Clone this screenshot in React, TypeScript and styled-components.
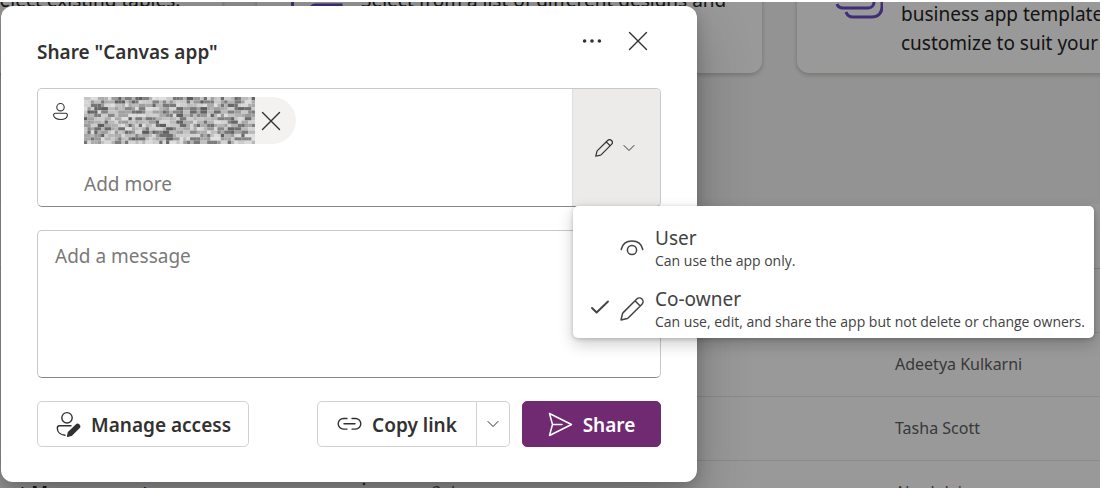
import React from "react";
import styled, { createGlobalStyle } from "styled-components";

const GlobalStyle = createGlobalStyle`
  * { box-sizing: border-box; }
  html, body { margin: 0; background: #ffffff; }
  body, button, input, textarea {
    font-family: "Noto Sans", "Open Sans", sans-serif;
  }
`;

/* ---------- Page behind the dialog ---------- */

const Screen = styled.div`
  height: 100vh;
  padding: 2px 2px 0 0;
  overflow: hidden;
`;

const Page = styled.main`
  position: relative;
  height: 100%;
  background: #f6f6f5;
  overflow: hidden;
`;

const Cards = styled.section`
  display: grid;
  grid-template-columns: repeat(3, 505px);
  grid-template-rows: 71px;
  gap: 35px;
  align-items: end;
  justify-content: start;
  height: 71px;
  margin-left: -283px;
`;

const Card = styled.article`
  display: flex;
  align-items: center;
  gap: 18px;
  height: 131px;
  padding: 14px 24px 0 34px;
  border-radius: 12px;
  background: #ffffff;
  box-shadow: 0 2px 5px rgba(0, 0, 0, 0.22);
`;

const CardIcon = styled.svg`
  flex: none;
  width: 52px;
  height: 52px;
`;

const CardText = styled.p<{ $lines: number }>`
  height: ${(p) => p.$lines * 29}px;
  margin: 0;
  padding-top: 29px;
  font-size: 19px;
  line-height: 29px;
  color: #242424;
  white-space: nowrap;
`;

const TablePanel = styled.section`
  margin-top: 131px;
  background: #ffffff;
`;

const AppsTable = styled.table`
  width: 1121px;
  margin-left: -21px;
  table-layout: fixed;
  border-collapse: collapse;
  font-size: 16px;
  color: #605e5c;
`;

const HeadCell = styled.th<{ $width?: string }>`
  width: ${(p) => p.$width ?? "auto"};
  height: 64px;
  padding: 0;
  text-align: left;
  font-weight: 400;
  border-bottom: 1px solid #d8d8d8;
`;

const Cell = styled.td<{ $strong?: boolean }>`
  height: 64px;
  padding: 0;
  border-bottom: 1px solid #e8e8e8;
  font-size: ${(p) => (p.$strong ? "18px" : "16px")};
  font-weight: ${(p) => (p.$strong ? 600 : 400)};
  color: ${(p) => (p.$strong ? "#242424" : "inherit")};
`;

/* ---------- Dialog ---------- */

const Scrim = styled.div`
  position: absolute;
  inset: 0;
  padding: 4px 1px;
  background: rgba(0, 0, 0, 0.4);
`;

const Dialog = styled.form`
  width: 100%;
  max-width: 696px;
  padding: 12px 36px 35px;
  border-radius: 12px;
  background: #ffffff;
  box-shadow: 0 24px 56px rgba(0, 0, 0, 0.24), 0 4px 16px rgba(0, 0, 0, 0.2);
  color: #323130;
`;

const Header = styled.header`
  display: flex;
  justify-content: space-between;
  height: 70px;
`;

const Title = styled.h2`
  margin: 0;
  font-size: 19px;
  font-weight: 600;
  line-height: 68px;
`;

const HeaderActions = styled.div`
  display: flex;
  height: 46px;
`;

const IconButton = styled.button<{ $width: number }>`
  display: flex;
  align-items: center;
  justify-content: center;
  width: ${(p) => p.$width}px;
  padding: 0;
  border: 0;
  background: transparent;
  color: #323130;
`;

const Picker = styled.div`
  display: flex;
  height: 119px;
  border: 1px solid #c8c8c8;
  border-bottom-color: #8a8886;
  border-radius: 5px;
`;

const PickerIcon = styled.div`
  flex: none;
  width: 46px;
  padding: 13px 0 0 14px;
`;

const PickerBody = styled.div`
  flex: 1;
  min-width: 0;
  padding-top: 8px;
`;

const Chip = styled.div`
  display: flex;
  width: 212px;
  height: 47px;
  border-radius: 0 24px 24px 0;
  background: #f3f2f1;
`;

const AddMore = styled.input`
  display: block;
  width: 100%;
  height: 30px;
  margin-top: 25px;
  padding: 0;
  border: 0;
  outline: 0;
  background: transparent;
  font-size: 19px;
  &::placeholder { color: #7a7978; opacity: 1; }
`;

const Permission = styled.div`
  position: relative;
  flex: none;
  width: 88px;
`;

const PermissionButton = styled.button`
  display: flex;
  align-items: center;
  justify-content: center;
  gap: 10px;
  width: 100%;
  height: 100%;
  padding: 0 3px 0 0;
  border: 0;
  border-left: 1px solid #e1dfdd;
  border-radius: 0 4px 4px 0;
  background: #edebe9;
  color: #323130;
`;

const Menu = styled.div`
  position: absolute;
  top: 100%;
  left: 1px;
  z-index: 2;
  width: 521px;
  padding: 10px 0 0;
  border-radius: 5px;
  background: #ffffff;
  box-shadow: 0 6px 16px rgba(0, 0, 0, 0.2), 0 1px 4px rgba(0, 0, 0, 0.2);
`;

const MenuItem = styled.button`
  display: grid;
  grid-template-columns: 24px 24px 1fr;
  align-items: center;
  justify-items: center;
  gap: 8px;
  width: 100%;
  height: 61px;
  padding: 2px 0 0 15px;
  border: 0;
  background: transparent;
  text-align: left;
  color: #424242;
`;

const MenuText = styled.span`
  display: flex;
  flex-direction: column;
  justify-self: start;
  padding: 2px 0 0 3px;
`;

const MenuTitle = styled.span`
  font-size: 19px;
  line-height: 24px;
`;

const MenuHint = styled.span`
  font-family: "Open Sans", "Noto Sans", sans-serif;
  font-size: 14px;
  line-height: 22px;
  white-space: nowrap;
`;

const Message = styled.textarea`
  display: block;
  width: 100%;
  height: 148px;
  margin: 23px 0;
  padding: 11px 17px;
  border: 1px solid #c8c8c8;
  border-bottom-color: #8a8886;
  border-radius: 5px;
  outline: 0;
  resize: none;
  font-size: 19px;
  line-height: 28px;
  &::placeholder { color: #7a7978; opacity: 1; }
`;

const Footer = styled.footer`
  display: flex;
  gap: 12px;
  height: 46px;
`;

const Button = styled.button<{ $primary?: boolean; $width: number }>`
  display: flex;
  align-items: center;
  justify-content: center;
  gap: 10px;
  width: ${(p) => p.$width}px;
  padding: 0;
  border: 1px solid ${(p) => (p.$primary ? "#702a72" : "#d1d1d1")};
  border-radius: 5px;
  background: ${(p) => (p.$primary ? "#702a72" : "#ffffff")};
  color: ${(p) => (p.$primary ? "#ffffff" : "#323130")};
  font-size: 19px;
  font-weight: 600;
  white-space: nowrap;
`;

const ButtonLabel = styled.span`
  padding-top: 2px;
`;

const SplitButton = styled.div`
  display: flex;
  margin-left: auto;
  & > :first-child { border-radius: 5px 0 0 5px; }
  & > :last-child { border-radius: 0 5px 5px 0; border-left: 0; }
`;

/* ---------- Drawings ---------- */

const stroke = {
  fill: "none",
  stroke: "currentColor",
  strokeLinecap: "round" as const,
  strokeLinejoin: "round" as const,
};

const CloseIcon = () => (
  <svg width="20" height="20" viewBox="0 0 20 20" aria-hidden="true" {...stroke} strokeWidth="1.4">
    <path d="M1.5 1.5 18.5 18.5M18.5 1.5 1.5 18.5" />
  </svg>
);

const MoreIcon = () => (
  <svg width="20" height="6" viewBox="0 0 20 6" aria-hidden="true" fill="currentColor">
    <circle cx="2.6" cy="3" r="1.8" />
    <circle cx="10" cy="3" r="1.8" />
    <circle cx="17.4" cy="3" r="1.8" />
  </svg>
);

const RowMenuIcon = () => (
  <svg width="4" height="16" viewBox="0 0 4 16" aria-hidden="true" fill="#742774">
    <circle cx="2" cy="2" r="1.3" />
    <circle cx="2" cy="8" r="1.3" />
    <circle cx="2" cy="14" r="1.3" />
  </svg>
);

const PersonIcon = () => (
  <svg width="17" height="19" viewBox="0 0 17 19" aria-hidden="true" {...stroke} strokeWidth="1.1">
    <circle cx="8.5" cy="5.2" r="3.7" />
    <path d="M3.3 11.3h10.4a1.6 1.6 0 0 1 1.7 1.7c0 2.9-3 4.5-6.9 4.500s-6.9-1.600-6.900-4.500a1.600 1.600 0 0 1 1.700-1.700z" />
  </svg>
);

const ManageIcon = () => (
  <svg width="26" height="26" viewBox="0 0 26 26" aria-hidden="true" {...stroke} strokeWidth="1.4">
    <circle cx="12" cy="6.8" r="5.2" />
    <path d="M16 14.8H4.5a2.2 2.2 0 0 0-2.200 2.200c0 4.200 3.200 6.900 7.700 7.200" />
    <path d="M13.4 21.6 21.2 14a1.9 1.9 0 0 1 2.800 2.800L16.200 24.400 12.600 25.300Z" fill="currentColor" />
  </svg>
);

const LinkIcon = () => (
  <svg width="25" height="14" viewBox="0 0 25 14" aria-hidden="true" {...stroke} strokeWidth="1.4">
    <path d="M10 1.5H6.500a5.300 5.300 0 0 0 0 10.600H10M15 1.500h3.500a5.300 5.300 0 0 1 0 10.600H15M7 6.800h11" />
  </svg>
);

const SendIcon = () => (
  <svg width="25" height="25" viewBox="0 0 25 25" aria-hidden="true" {...stroke} strokeWidth="1.5">
    <path d="M1.5 1.5 23.5 12.5 1.5 23.5 4.5 12.5ZM4.5 12.5H14" />
  </svg>
);

const ChevronIcon = () => (
  <svg width="12" height="8" viewBox="0 0 12 8" aria-hidden="true" {...stroke} strokeWidth="1">
    <path d="M1 1.5 6 6.500 11 1.500" />
  </svg>
);

const PencilIcon = ({ size, weight }: { size: number; weight: number }) => (
  <svg width={size} height={size} viewBox="0 0 24 24" aria-hidden="true" {...stroke} strokeWidth={weight}>
    <path d="M22 2a3.700 3.700 0 0 0-5.200 0L3.200 15.600a3 3 0 0 0-.7 1.200L1 23l6.200-1.500a3 3 0 0 0 1.200-.7L22 7.200A3.700 3.700 0 0 0 22 2ZM15 3.800 20.200 9" />
  </svg>
);

const EyeIcon = () => (
  <svg width="24" height="24" viewBox="0 0 24 24" aria-hidden="true" {...stroke} strokeWidth="1.5">
    <path d="M1.200 13.500C2.400 8 6.800 5 12 5s9.600 3 10.800 8.500" />
    <circle cx="12" cy="14" r="4.600" />
  </svg>
);

const CheckIcon = () => (
  <svg width="20" height="16" viewBox="0 0 20 16" aria-hidden="true" {...stroke} strokeWidth="1.9">
    <path d="M2 9 6.600 13.500 18 2.500" />
  </svg>
);

const MOSAIC_COLUMNS = 50;
const MOSAIC_ROWS = 14;

/** Grey mosaic that hides the name of the selected person. */
const Mosaic = () => {
  let seed = 7919;
  const next = () => {
    seed = (seed * 16807) % 2147483647;
    return seed / 2147483647;
  };
  const cells: React.ReactElement[] = [];
  for (let y = 0; y < MOSAIC_ROWS; y += 1) {
    for (let x = 0; x < MOSAIC_COLUMNS; ) {
      const run = Math.min(next() < 0.4 ? 2 : 1, MOSAIC_COLUMNS - x);
      const dark = next() < 0.32;
      const tone = Math.round(dark ? 92 + next() * 45 : 150 + next() * 75);
      cells.push(
        <rect key={`${x}-${y}`} x={x} y={y} width={run} height="1" fill={`rgb(${tone},${tone},${tone})`} />
      );
      x += run;
    }
  }
  return (
    <svg
      width="171"
      height="47"
      viewBox={`0 0 ${MOSAIC_COLUMNS} ${MOSAIC_ROWS}`}
      preserveAspectRatio="none"
      role="img"
      aria-label="Hidden name"
    >
      {cells}
    </svg>
  );
};

const people = [
  { app: "", modified: "", owner: "" },
  { app: "", modified: "", owner: "Adeetya Kulkarni" },
  { app: "", modified: "", owner: "Tasha Scott" },
  { app: "Asset Management", modified: "3 d ago", owner: "Akash Jain" },
];

const options = [
  { title: "User", hint: "Can use the app only.", icon: <EyeIcon />, checked: false },
  {
    title: "Co-owner",
    hint: "Can use, edit, and share the app but not delete or change owners.",
    icon: <PencilIcon size={24} weight={1.5} />,
    checked: true,
  },
];

export default function App() {
  return (
    <Screen>
      <GlobalStyle />
      <Page>
        <Cards>
          <Card>
            <CardIcon viewBox="0 0 52 52" aria-hidden="true" />
            <CardText $lines={4}>Upload one file, or select existing tables.</CardText>
          </Card>
          <Card>
            <CardIcon viewBox="0 0 52 52" aria-hidden="true" fill="none" stroke="#6b4bc8" strokeWidth="3">
              <path d="M1.5 0V30h12" />
              <path d="M20 40V20a4 4 0 0 1 4-4h26v24M35 16v24" />
            </CardIcon>
            <CardText $lines={4}>Select from a list of different designs and</CardText>
          </Card>
          <Card>
            <CardIcon viewBox="0 0 52 52" aria-hidden="true" fill="none" stroke="#6b4bc8" strokeWidth="3">
              <path d="M6 15c1 3 3 4 6 4h25c4 0 6-3 6-6V0" />
              <path d="M15 23c1 3 3 5 7 5h19c6 0 10-4 10-10V0" />
            </CardIcon>
            <CardText $lines={3}>
              business app templates to
              <br />
              customize to suit your needs
            </CardText>
          </Card>
        </Cards>
        <TablePanel>
          <AppsTable>
            <thead>
              <tr>
                <HeadCell $width="383px">Name</HeadCell>
                <HeadCell $width="70px" aria-label="Commands" />
                <HeadCell $width="463px">Modified</HeadCell>
                <HeadCell>Owner</HeadCell>
              </tr>
            </thead>
            <tbody>
              {people.map((row, i) => (
                <tr key={i}>
                  <Cell $strong>{row.app}</Cell>
                  <Cell>{row.app && <RowMenuIcon />}</Cell>
                  <Cell>{row.modified}</Cell>
                  <Cell>{row.owner}</Cell>
                </tr>
              ))}
            </tbody>
          </AppsTable>
        </TablePanel>

        <Scrim>
          <Dialog role="dialog" aria-labelledby="share-title" onSubmit={(e) => e.preventDefault()}>
            <Header>
              <Title id="share-title">Share "Canvas app"</Title>
              <HeaderActions>
                <IconButton type="button" $width={46} aria-label="More options">
                  <MoreIcon />
                </IconButton>
                <IconButton type="button" $width={46} aria-label="Close">
                  <CloseIcon />
                </IconButton>
              </HeaderActions>
            </Header>

            <Picker>
              <PickerIcon>
                <PersonIcon />
              </PickerIcon>
              <PickerBody>
                <Chip>
                  <Mosaic />
                  <IconButton type="button" $width={32} aria-label="Remove person">
                    <CloseIcon />
                  </IconButton>
                </Chip>
                <AddMore type="text" aria-label="Add more people" placeholder="Add more" />
              </PickerBody>
              <Permission>
                <PermissionButton type="button" aria-label="Permission" aria-haspopup="menu" aria-expanded="true">
                  <PencilIcon size={18} weight={1.6} />
                  <ChevronIcon />
                </PermissionButton>
                <Menu role="menu">
                  {options.map((option) => (
                    <MenuItem key={option.title} type="button" role="menuitemradio" aria-checked={option.checked}>
                      <span>{option.checked && <CheckIcon />}</span>
                      {option.icon}
                      <MenuText>
                        <MenuTitle>{option.title}</MenuTitle>
                        <MenuHint>{option.hint}</MenuHint>
                      </MenuText>
                    </MenuItem>
                  ))}
                </Menu>
              </Permission>
            </Picker>

            <Message aria-label="Message" placeholder="Add a message" />

            <Footer>
              <Button type="button" $width={212}>
                <ManageIcon />
                <ButtonLabel>Manage access</ButtonLabel>
              </Button>
              <SplitButton>
                <Button type="button" $width={160}>
                  <LinkIcon />
                  <ButtonLabel>Copy link</ButtonLabel>
                </Button>
                <Button type="button" $width={33} aria-label="More copy options">
                  <ChevronIcon />
                </Button>
              </SplitButton>
              <Button type="submit" $primary $width={139}>
                <SendIcon />
                <ButtonLabel>Share</ButtonLabel>
              </Button>
            </Footer>
          </Dialog>
        </Scrim>
      </Page>
    </Screen>
  );
}
